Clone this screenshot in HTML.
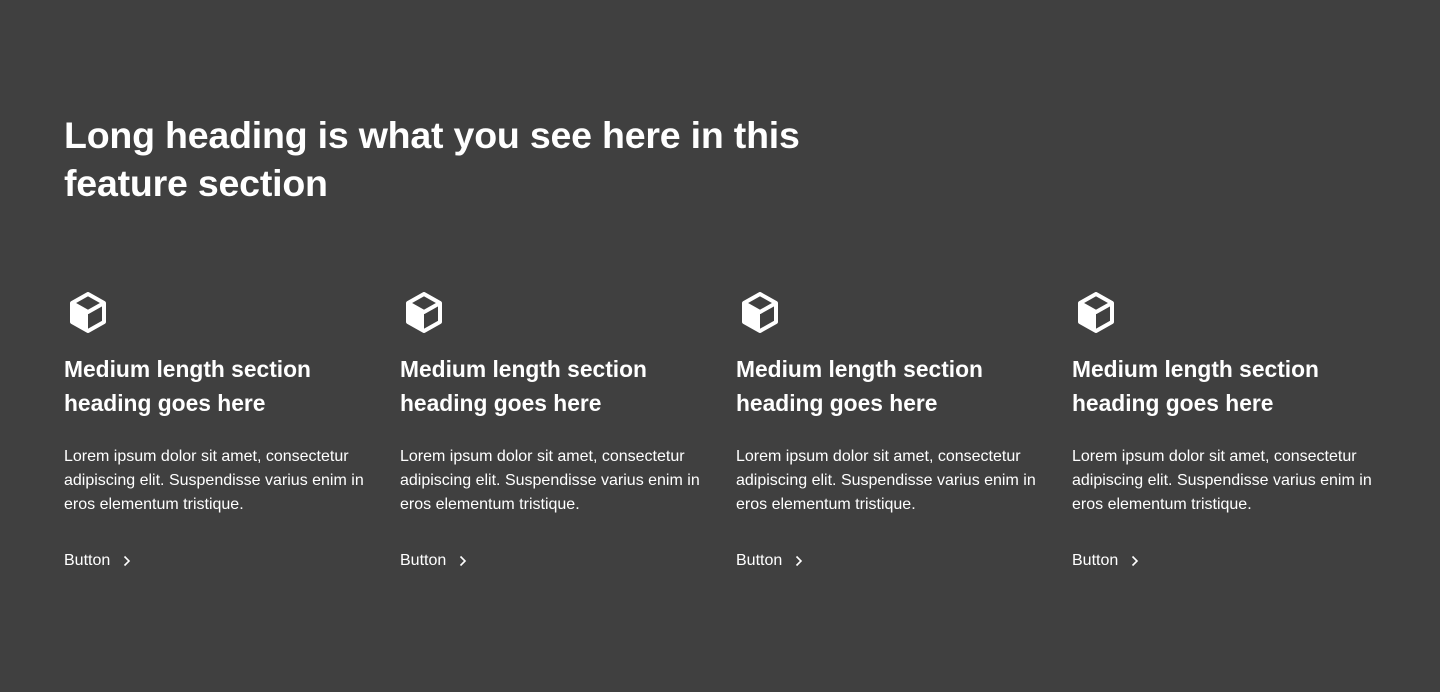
<!DOCTYPE html>
<html><head><meta charset="utf-8"><style>
html,body{margin:0;padding:0}
body{width:1440px;height:692px;background:#404040;color:#fff;font-family:"Liberation Sans",sans-serif;overflow:hidden;position:relative}
h1{position:absolute;left:64px;top:111px;margin:0;font-size:37.5px;line-height:48px;font-weight:700;width:800px;letter-spacing:-0.2px}
.card{position:absolute;top:292px;width:310px}
.card svg{display:block;margin-left:5px}
.card h3{margin:19px 0 0;font-size:22.8px;line-height:34px;font-weight:700}
.card p{margin:25px 0 0;font-size:16px;line-height:24px}
.btn{margin-top:32px;font-size:16px;line-height:24px;display:flex;align-items:center;gap:8px}
</style></head><body>
<h1>Long heading is what you see here in this feature section</h1>
<div class="card" style="left:64px"><svg width="38" height="41" viewBox="0 0 38 41"><path d="M19 2 L35 11 L35 30 L19 39 L3 30 L3 11 Z" fill="none" stroke="#fff" stroke-width="4" stroke-linejoin="round"/><path d="M3 11 L19 20 L19 39 L3 30 Z" fill="#fff"/><path d="M3 11 L19 20 L35 11" fill="none" stroke="#fff" stroke-width="4" stroke-linejoin="round"/></svg><h3>Medium length section heading goes here</h3><p>Lorem ipsum dolor sit amet, consectetur adipiscing elit. Suspendisse varius enim in eros elementum tristique.</p><div class="btn">Button <svg width="8" height="12" viewBox="0 0 8 12"><path d="M1.5 1.5 L6 6 L1.5 10.5" fill="none" stroke="#fff" stroke-width="1.6"/></svg></div></div>
<div class="card" style="left:400px"><svg width="38" height="41" viewBox="0 0 38 41"><path d="M19 2 L35 11 L35 30 L19 39 L3 30 L3 11 Z" fill="none" stroke="#fff" stroke-width="4" stroke-linejoin="round"/><path d="M3 11 L19 20 L19 39 L3 30 Z" fill="#fff"/><path d="M3 11 L19 20 L35 11" fill="none" stroke="#fff" stroke-width="4" stroke-linejoin="round"/></svg><h3>Medium length section heading goes here</h3><p>Lorem ipsum dolor sit amet, consectetur adipiscing elit. Suspendisse varius enim in eros elementum tristique.</p><div class="btn">Button <svg width="8" height="12" viewBox="0 0 8 12"><path d="M1.5 1.5 L6 6 L1.5 10.5" fill="none" stroke="#fff" stroke-width="1.6"/></svg></div></div>
<div class="card" style="left:736px"><svg width="38" height="41" viewBox="0 0 38 41"><path d="M19 2 L35 11 L35 30 L19 39 L3 30 L3 11 Z" fill="none" stroke="#fff" stroke-width="4" stroke-linejoin="round"/><path d="M3 11 L19 20 L19 39 L3 30 Z" fill="#fff"/><path d="M3 11 L19 20 L35 11" fill="none" stroke="#fff" stroke-width="4" stroke-linejoin="round"/></svg><h3>Medium length section heading goes here</h3><p>Lorem ipsum dolor sit amet, consectetur adipiscing elit. Suspendisse varius enim in eros elementum tristique.</p><div class="btn">Button <svg width="8" height="12" viewBox="0 0 8 12"><path d="M1.5 1.5 L6 6 L1.5 10.5" fill="none" stroke="#fff" stroke-width="1.6"/></svg></div></div>
<div class="card" style="left:1072px"><svg width="38" height="41" viewBox="0 0 38 41"><path d="M19 2 L35 11 L35 30 L19 39 L3 30 L3 11 Z" fill="none" stroke="#fff" stroke-width="4" stroke-linejoin="round"/><path d="M3 11 L19 20 L19 39 L3 30 Z" fill="#fff"/><path d="M3 11 L19 20 L35 11" fill="none" stroke="#fff" stroke-width="4" stroke-linejoin="round"/></svg><h3>Medium length section heading goes here</h3><p>Lorem ipsum dolor sit amet, consectetur adipiscing elit. Suspendisse varius enim in eros elementum tristique.</p><div class="btn">Button <svg width="8" height="12" viewBox="0 0 8 12"><path d="M1.5 1.5 L6 6 L1.5 10.5" fill="none" stroke="#fff" stroke-width="1.6"/></svg></div></div>
</body></html>
